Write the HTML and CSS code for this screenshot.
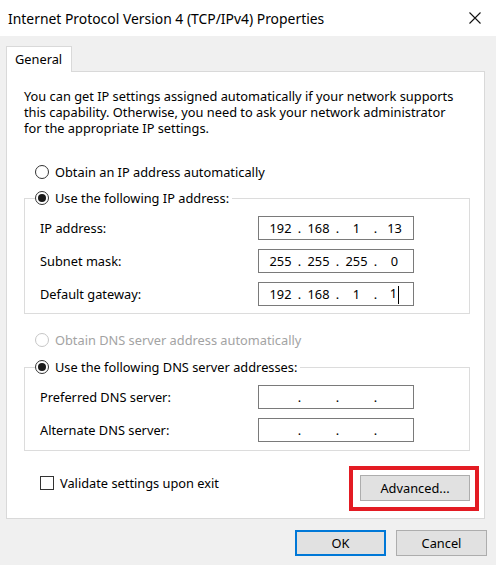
FILE: index.html
```html
<!DOCTYPE html>
<html>
<head>
<meta charset="utf-8">
<title>Internet Protocol Version 4 (TCP/IPv4) Properties</title>
<link rel="stylesheet" href="styles.css">
</head>
<body>
<div class="window">
  <div class="titlebar">
    <span class="title">Internet Protocol Version 4 (TCP/IPv4) Properties</span>
    <svg class="close" width="14" height="14" viewBox="0 0 14 14"><path d="M1.5 1.5L12.5 12.5M12.5 1.5L1.5 12.5" stroke="#111" stroke-width="1.1" fill="none"/></svg>
  </div>
  <div class="content">
    <div class="tabs"><div class="tab">General</div></div>
    <div class="panel">
      <p class="intro">You can get IP settings assigned automatically if your network supports<br>this capability. Otherwise, you need to ask your network administrator<br>for the appropriate IP settings.</p>

      <div class="radio-row first-radio"><span class="radio"></span><span>Obtain an IP address automatically</span></div>

      <fieldset class="group ip-group">
        <legend><div class="radio-row legend-row"><span class="radio checked"></span><span>Use the following IP address:</span></div></legend>
        <div class="field-row"><span class="field-label">IP address:</span>
          <div class="ip"><span class="oct">192</span><span class="dot">.</span><span class="oct">168</span><span class="dot">.</span><span class="oct">1</span><span class="dot">.</span><span class="oct">13</span></div>
        </div>
        <div class="field-row"><span class="field-label">Subnet mask:</span>
          <div class="ip"><span class="oct">255</span><span class="dot">.</span><span class="oct">255</span><span class="dot">.</span><span class="oct">255</span><span class="dot">.</span><span class="oct">0</span></div>
        </div>
        <div class="field-row"><span class="field-label">Default gateway:</span>
          <div class="ip"><span class="oct">192</span><span class="dot">.</span><span class="oct">168</span><span class="dot">.</span><span class="oct">1</span><span class="dot">.</span><span class="oct">1<span class="caret"></span></span></div>
        </div>
      </fieldset>

      <div class="radio-row dns-auto disabled"><span class="radio"></span><span>Obtain DNS server address automatically</span></div>

      <fieldset class="group dns-group">
        <legend><div class="radio-row legend-row"><span class="radio checked"></span><span>Use the following DNS server addresses:</span></div></legend>
        <div class="field-row"><span class="field-label">Preferred DNS server:</span>
          <div class="ip"><span class="oct"></span><span class="dot">.</span><span class="oct"></span><span class="dot">.</span><span class="oct"></span><span class="dot">.</span><span class="oct"></span></div>
        </div>
        <div class="field-row"><span class="field-label">Alternate DNS server:</span>
          <div class="ip"><span class="oct"></span><span class="dot">.</span><span class="oct"></span><span class="dot">.</span><span class="oct"></span><span class="dot">.</span><span class="oct"></span></div>
        </div>
      </fieldset>

      <div class="bottom-row">
        <div class="check-row"><span class="checkbox"></span><span>Validate settings upon exit</span></div>
        <div class="highlight"><button class="btn advanced">Advanced...</button></div>
      </div>
    </div>
    <div class="dialog-buttons">
      <button class="btn default">OK</button>
      <button class="btn">Cancel</button>
    </div>
  </div>
</div>
</body>
</html>
```
FILE: styles.css
```css
* { box-sizing: border-box; }
html, body { margin: 0; padding: 0; }
body {
  width: 496px;
  height: 565px;
  background: #f0f0f0;
  font-family: "Noto Sans", "Open Sans", "Liberation Sans", sans-serif;
  font-size: 12.8px;
  color: #000;
  overflow: hidden;
}
.window { width: 496px; height: 565px; background: #f0f0f0; }

.titlebar {
  height: 36px;
  background: #fff;
  display: flex;
  align-items: center;
  padding: 0 14px 0 8px;
}
.title { font-size: 13.9px; color: #000; }
.close { margin-left: auto; display: block; }

.content { padding: 10px 11px 0 6px; }

.tabs { display: flex; }
.tab {
  position: relative;
  z-index: 1;
  width: 66px;
  height: 26px;
  margin-bottom: -1px;
  padding-left: 8px;
  line-height: 24px;
  background: #fff;
  border: 1px solid #d9d9d9;
  border-bottom: none;
}

.panel {
  background: #fff;
  border: 1px solid #d9d9d9;
  padding: 16px 5px 7px 17px;
}

.intro {
  margin: 0;
  line-height: 16px;
  white-space: nowrap;
}

.radio-row {
  display: flex;
  align-items: center;
  height: 20px;
  white-space: nowrap;
}
.first-radio { margin: 26px 0 0 11px; }
.dns-auto { margin: 16px 0 0 11px; }
.disabled { color: #a3a3a3; }

.radio {
  width: 14px;
  height: 14px;
  border: 1px solid #333;
  border-radius: 50%;
  background: #fff;
  margin-right: 6px;
  flex: none;
  display: flex;
  align-items: center;
  justify-content: center;
}
.radio.checked::after {
  content: "";
  width: 8px;
  height: 8px;
  border-radius: 50%;
  background: #1a1a1a;
}
.disabled .radio { border-color: #c6c6c6; }

.group {
  margin: 6px 9px 0 0;
  padding: 8px 10px 7px 10px;
  border: 1px solid #dcdcdc;
  min-width: 0;
}
.dns-group { margin-top: 7px; padding-bottom: 8px; }
.group legend { padding: 0 3px 0 0; margin: 0; }

.field-row {
  display: grid;
  grid-template-columns: 223px 156px;
  align-items: center;
  height: 24px;
}
.field-row + .field-row { margin-top: 9px; }
.field-label { padding-left: 5px; white-space: nowrap; }

.ip {
  display: flex;
  align-items: center;
  width: 156px;
  height: 24px;
  border: 1px solid #7a7a7a;
  padding-left: 6px;
  background: #fff;
}
.oct { width: 31px; text-align: center; white-space: nowrap; }
.dot { width: 7px; text-align: center; }
.caret {
  display: inline-block;
  width: 1px;
  height: 18px;
  background: #000;
  margin-left: 1px;
  vertical-align: middle;
}

.bottom-row {
  display: flex;
  justify-content: space-between;
  align-items: flex-start;
  margin-top: 15px;
}
.check-row {
  display: flex;
  align-items: center;
  margin: 10px 0 0 16px;
  height: 14px;
  white-space: nowrap;
}
.checkbox {
  width: 14px;
  height: 14px;
  border: 1px solid #333;
  background: #fff;
  margin-right: 6px;
}

.highlight {
  border: 4px solid #e31b23;
  padding: 5px 5px 6px 7px;
}

.btn {
  font-family: inherit;
  font-size: 12.8px;
  color: #000;
  background: #e1e1e1;
  border: 1px solid #adadad;
  width: 91px;
  height: 26px;
  padding: 0;
  margin: 0;
  display: block;
}
.advanced { width: 110px; }
.default { border: 2px solid #0078d7; }

.dialog-buttons {
  display: flex;
  justify-content: flex-end;
  gap: 10px;
  margin: 11px -2px 0 0;
}
```
